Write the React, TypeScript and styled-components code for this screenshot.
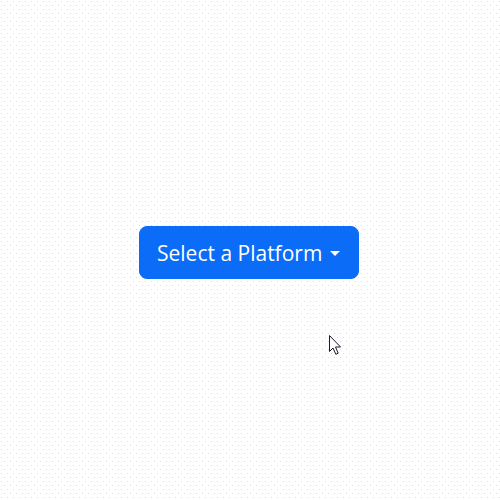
import React from "react";
import styled, { createGlobalStyle } from "styled-components";

const GlobalStyle = createGlobalStyle`
  html, body {
    margin: 0;
    padding: 0;
    background: #ffffff;
  }
  * { box-sizing: border-box; }
`;

const Page = styled.div`
  position: relative;
  width: 500px;
  height: 500px;
  display: flex;
  align-items: center;
  justify-content: center;
  padding: 4px 2px 0 0;
  background-color: #ffffff;
  background-image:
    radial-gradient(circle at 1.5px 1.5px, #f7ea5a 0.6px, transparent 1px),
    radial-gradient(circle at 4.5px 5.5px, #f7ea5a 0.6px, transparent 1px);
  background-size: 6px 8px;
`;

const DropdownButton = styled.button`
  display: inline-flex;
  align-items: center;
  height: 53px;
  width: 220px;
  padding: 3px 0 0 17px;
  border: 1px solid #0b6cf8;
  border-radius: 8px;
  background: #0b6cf8;
  color: #ffffff;
  font-family: "Open Sans", "Noto Sans", sans-serif;
  font-size: 21px;
  line-height: 1;
  cursor: pointer;
`;

const Label = styled.span`
  white-space: nowrap;
`;

const Caret = styled.span`
  display: inline-block;
  margin-left: 8px;
  width: 0;
  height: 0;
  border-top: 5px solid #ffffff;
  border-left: 5px solid transparent;
  border-right: 5px solid transparent;
`;

const Cursor = styled.svg`
  position: absolute;
  left: 328px;
  top: 334px;
`;

export default function App() {
  return (
    <>
      <GlobalStyle />
      <Page>
        <DropdownButton type="button">
          <Label>Select a Platform</Label>
          <Caret />
        </DropdownButton>
        <Cursor width="14" height="22" viewBox="0 0 14 22">
          <path
            d="M1.5 1.5 L1.5 17.5 L5 14 L7.8 20.3 L10.2 19.2 L7.5 13 L12.5 13 Z"
            fill="#ffffff"
            stroke="#1a1a2e"
            strokeWidth="1"
            strokeLinejoin="miter"
          />
        </Cursor>
      </Page>
    </>
  );
}
